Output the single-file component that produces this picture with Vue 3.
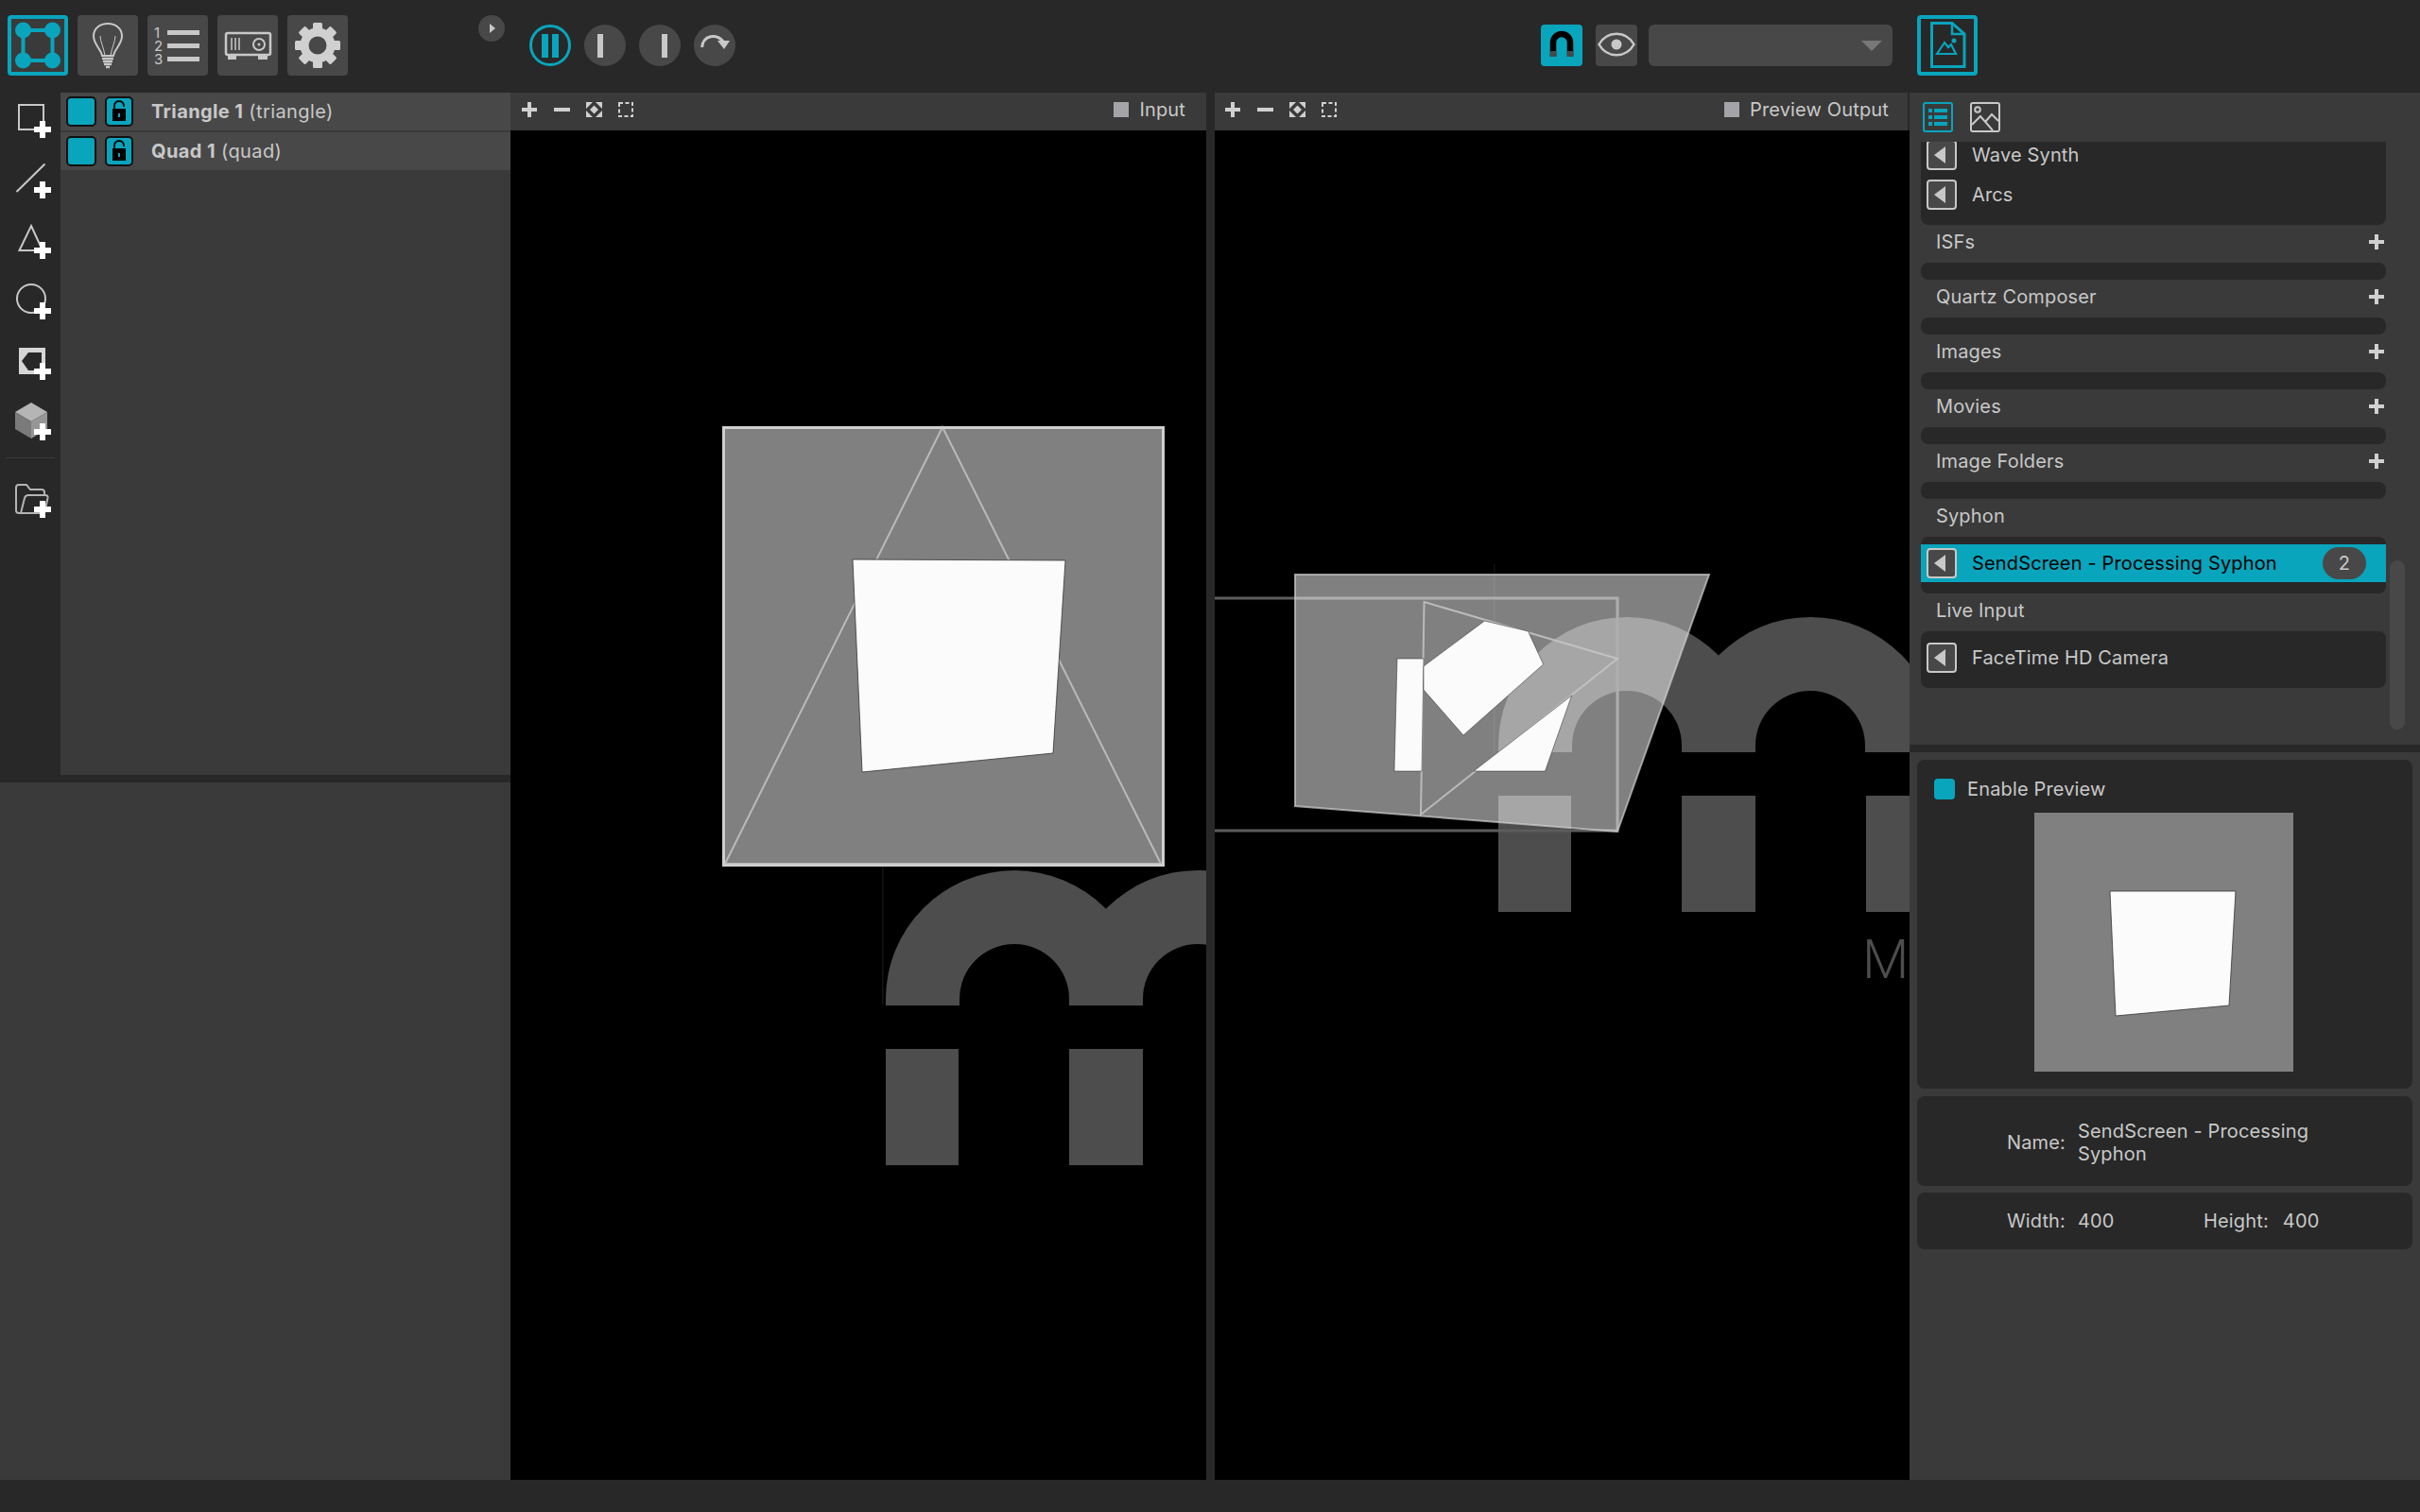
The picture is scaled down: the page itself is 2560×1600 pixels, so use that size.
<script setup>
const layers = [
  { name: 'Triangle 1', type: '(triangle)' },
  { name: 'Quad 1', type: '(quad)' },
]
const emptySections = ['ISFs', 'Quartz Composer', 'Images', 'Movies', 'Image Folders']
const generators = ['Wave Synth', 'Arcs']
const gearTeeth = [0, 45, 90, 135, 180, 225, 270, 315]
</script>

<template>
  <div class="app">
    <!-- top toolbar -->
    <header class="topbar">
      <div class="mode-btns">
        <button class="mode-btn mode-btn--active">
          <svg viewBox="0 0 56 56" width="56" height="56">
            <g transform="translate(-4 -4)" fill="#08a5bd" stroke="#08a5bd">
              <path d="M16.5 16H47.5V48H16.5Z" fill="none" stroke-width="4" />
              <circle cx="16.5" cy="16" r="8.500" stroke="none" />
              <circle cx="47.5" cy="16" r="8.500" stroke="none" />
              <circle cx="16.5" cy="48" r="8.500" stroke="none" />
              <circle cx="47.5" cy="48" r="8.500" stroke="none" />
            </g>
          </svg>
        </button>
        <button class="mode-btn">
          <svg viewBox="0 0 64 64" width="64" height="64" fill="none" stroke="#c8c8c8" stroke-width="2">
            <path d="M26 43C25 36 17 31 17 22C17 14 24 9 32 9C40 9 47 14 47 22C47 31 39 36 38 43Z" />
            <path d="M29 43C28 35 24 28 24 22M35 43C36 35 40 28 40 22" stroke-width="1" />
            <path d="M26 46H38M27 49H37M28 52H36" stroke-width="2.4" />
            <path d="M30 55H34" stroke-width="2.4" />
          </svg>
        </button>
        <button class="mode-btn">
          <svg viewBox="0 0 64 64" width="64" height="64">
            <g fill="#c8c8c8">
              <rect x="21" y="16" width="34" height="5" />
              <rect x="21" y="30" width="34" height="5" />
              <rect x="21" y="44" width="34" height="5" />
            </g>
            <g class="list-digits" fill="#c8c8c8">
              <text x="7" y="24">1</text>
              <text x="7" y="38">2</text>
              <text x="7" y="52">3</text>
            </g>
          </svg>
        </button>
        <button class="mode-btn">
          <svg viewBox="0 0 64 64" width="64" height="64" fill="none" stroke="#c8c8c8">
            <rect x="9" y="19" width="47" height="23" rx="2" stroke-width="2.5" />
            <path d="M15 24V37M19 24V37M23 24V37" stroke-width="1.5" />
            <circle cx="44" cy="31" r="6" stroke-width="2" />
            <circle cx="44" cy="31" r="1.5" fill="#c8c8c8" stroke="none" />
            <path d="M11 43H20V47H11ZM43 43H53V47H43Z" fill="#c8c8c8" stroke="none" />
          </svg>
        </button>
        <button class="mode-btn">
          <svg viewBox="0 0 64 64" width="64" height="64">
            <circle cx="32" cy="32" r="14" fill="none" stroke="#d0d0d0" stroke-width="9" />
            <rect
              v-for="a in gearTeeth"
              :key="a"
              x="27"
              y="8"
              width="10"
              height="10"
              rx="1.5"
              fill="#d0d0d0"
              :transform="`rotate(${a} 32 32)`"
            />
          </svg>
        </button>
      </div>

      <button class="collapse-btn">
        <svg viewBox="0 0 28 28" width="28" height="28"><path d="M12 9L18 14L12 19Z" fill="#c8c8c8" /></svg>
      </button>

      <div class="transport">
        <button class="round-btn round-btn--pause">
          <span class="pause-bar"></span><span class="pause-bar"></span>
        </button>
        <button class="round-btn"><span class="step-bar step-bar--left"></span></button>
        <button class="round-btn"><span class="step-bar step-bar--right"></span></button>
        <button class="round-btn">
          <svg viewBox="0 0 44 44" width="44" height="44">
            <path d="M8.500 24C10 11 24 9 31 18" fill="none" stroke="#c8c8c8" stroke-width="3" />
            <path d="M25 17H38L32 26Z" fill="#c8c8c8" />
          </svg>
        </button>
      </div>

      <div class="output-tools">
        <button class="square-btn square-btn--blue">
          <svg viewBox="0 0 44 44" width="44" height="44" fill="none">
            <path d="M13 34V19A9 9 0 0 1 31 19V34" stroke="#000" stroke-width="6.500" />
            <rect x="9.800" y="28" width="6.500" height="6" fill="#484848" />
            <rect x="27.800" y="28" width="6.500" height="6" fill="#484848" />
          </svg>
        </button>
        <button class="square-btn">
          <svg viewBox="0 0 44 44" width="44" height="44" fill="none">
            <path d="M3.500 21C12 6 32 6 40.500 21C32 36 12 36 3.500 21Z" stroke="#c8c8c8" stroke-width="2.500" />
            <circle cx="22" cy="21" r="5.500" fill="#c8c8c8" />
          </svg>
        </button>
        <div class="select"><span class="select__arrow"></span></div>
      </div>

      <button class="doc-btn">
        <svg viewBox="0 0 56 56" width="56" height="56" fill="none" stroke="#08a5bd" stroke-width="3">
          <path d="M11.500 4.500H33L46 16V50.500H11.500Z" />
          <path d="M33 4.500V16H46" stroke-width="2.500" />
          <path d="M17 37L25 25L29 30L32 27L37 37Z" stroke-width="2.200" />
          <circle cx="35" cy="23" r="2.500" fill="#08a5bd" stroke="none" />
        </svg>
      </button>
    </header>

    <main class="workspace">
      <!-- left column: tools and layer list -->
      <aside class="left-col">
        <div class="left-top">
          <nav class="tools">
            <svg class="tool" viewBox="0 0 64 64" fill="none" stroke="#c8c8c8" stroke-width="2">
              <rect x="20" y="6" width="26" height="26" />
              <path class="plus" d="M36 29H42V23H48V29H54V35H48V41H42V35H36Z" />
            </svg>
            <svg class="tool" viewBox="0 0 64 64" fill="none" stroke="#c8c8c8" stroke-width="2">
              <path d="M17.500 34L47.500 4.500" />
              <path class="plus" d="M36 29H42V23H48V29H54V35H48V41H42V35H36Z" />
            </svg>
            <svg class="tool" viewBox="0 0 64 64" fill="none" stroke="#c8c8c8" stroke-width="2">
              <path d="M33 6L45 32H20.500Z" />
              <path class="plus" d="M36 29H42V23H48V29H54V35H48V41H42V35H36Z" />
            </svg>
            <svg class="tool" viewBox="0 0 64 64" fill="none" stroke="#c8c8c8" stroke-width="2">
              <circle cx="33" cy="19" r="15" />
              <path class="plus" d="M36 29H42V23H48V29H54V35H48V41H42V35H36Z" />
            </svg>
            <svg class="tool" viewBox="0 0 64 64" fill="none">
              <path d="M20 7H48V35H20Z" fill="#d6d6d6" />
              <path d="M23 21L30 12H44V31H30Z" fill="#282828" />
              <path class="plus" d="M36 29H42V23H48V29H54V35H48V41H42V35H36Z" />
            </svg>
            <svg class="tool" viewBox="0 0 64 64" fill="none">
              <path d="M33 1L50 11L33 21L16 11Z" fill="#b5b5b5" />
              <path d="M16 11L33 21V39L16 29Z" fill="#7a7a7a" />
              <path d="M33 21L50 11V29L33 39Z" fill="#969696" />
              <path class="plus" d="M36 29H42V23H48V29H54V35H48V41H42V35H36Z" />
            </svg>
            <div class="tools__sep"></div>
            <svg class="tool tool--folder" viewBox="0 0 64 64" fill="none" stroke="#b4b4b4" stroke-width="2">
              <path d="M22 36H20Q17 36 17 33V9Q17 6 20 6H28L32 11H44Q47 11 47 14V17" />
              <path d="M22 36L26 20Q27 17 30 17H48Q51 17 50.500 20L47 36Z" />
              <path class="plus" d="M36 29H42V23H48V29H54V35H48V41H42V35H36Z" />
            </svg>
          </nav>
          <div class="layers">
            <div v-for="layer in layers" :key="layer.name" class="layer">
              <span class="layer__check"></span>
              <span class="layer__lock">
                <svg viewBox="0 0 30 32" width="30" height="32">
                  <path d="M10 13V10A5 5 0 0 1 20 10V11" fill="none" stroke="#000" stroke-width="2" />
                  <rect x="8" y="13" width="14" height="13" fill="#000" />
                  <rect x="14" y="18" width="2" height="4" fill="#08a5bd" />
                </svg>
              </span>
              <span class="layer__label"><b>{{ layer.name }}</b> {{ layer.type }}</span>
            </div>
          </div>
        </div>
        <div class="left-bottom"></div>
      </aside>

      <!-- input canvas -->
      <section class="stage stage--input">
        <div class="stage__bar">
          <svg class="stage__icons" viewBox="0 0 130 16" width="130" height="16">
            <path d="M6 0H10V6H16V10H10V16H6V10H0V6H6Z" fill="#d0d0d0" />
            <rect x="34" y="6" width="17" height="4" fill="#d0d0d0" />
            <path d="M68 0H75L68 7ZM85 0H78L85 7ZM68 16H75L68 9ZM85 16H78L85 9ZM76.500 3.500L81 8L76.500 12.500L72 8Z" fill="#d0d0d0" />
            <rect x="103" y="1" width="14" height="14" fill="none" stroke="#d0d0d0" stroke-width="2" stroke-dasharray="4 2.500" />
          </svg>
          <span class="stage__swatch"></span>
          <span class="stage__name">Input</span>
        </div>
        <svg class="stage__canvas" viewBox="540 138 736 1428">
          <rect x="933" y="917" width="1.500" height="146" fill="#141414" />
          <g fill="#4d4d4d">
            <path d="M937 1057A136 136 0 0 1 1209 1057L1209 1064H1131V1057A58 58 0 0 0 1015 1057V1064H937Z" />
            <path d="M1131 1057A136 136 0 0 1 1403 1057V1064H1325V1057A58 58 0 0 0 1209 1057V1064H1131Z" />
            <rect x="937" y="1110" width="77" height="123" />
            <rect x="1131" y="1110" width="78" height="123" />
          </g>
          <rect x="765.500" y="452.500" width="465" height="463" fill="#808080" stroke="#cfcfcf" stroke-width="3" />
          <path d="M997 452L1228 914H767Z" fill="none" stroke="#c8c8c8" stroke-width="2" opacity=".8" />
          <path d="M902 592L1127 593L1114 797L912 817Z" fill="#fbfbfb" stroke="#333" stroke-width=".8" />
        </svg>
      </section>

      <div class="stage-gap"></div>

      <!-- preview output canvas -->
      <section class="stage stage--output">
        <div class="stage__bar stage__bar--output">
          <svg class="stage__icons" viewBox="0 0 130 16" width="130" height="16">
            <path d="M6 0H10V6H16V10H10V16H6V10H0V6H6Z" fill="#d0d0d0" />
            <rect x="34" y="6" width="17" height="4" fill="#d0d0d0" />
            <path d="M68 0H75L68 7ZM85 0H78L85 7ZM68 16H75L68 9ZM85 16H78L85 9ZM76.500 3.500L81 8L76.500 12.500L72 8Z" fill="#d0d0d0" />
            <rect x="103" y="1" width="14" height="14" fill="none" stroke="#d0d0d0" stroke-width="2" stroke-dasharray="4 2.500" />
          </svg>
          <span class="stage__swatch"></span>
          <span class="stage__name">Preview Output</span>
        </div>
        <svg class="stage__canvas" viewBox="1285 138 735 1428">
          <rect x="1580" y="597" width="1.500" height="199" fill="#111" />
          <g fill="#4d4d4d">
            <path d="M1585 789A136 136 0 0 1 1857 789V796H1779V789A58 58 0 0 0 1663 789V796H1585Z" />
            <path d="M1779 789A136 136 0 0 1 2051 789V796H1973V789A58 58 0 0 0 1857 789V796H1779Z" />
            <rect x="1585" y="842" width="77" height="123" />
            <rect x="1779" y="842" width="78" height="123" />
            <rect x="1974" y="842" width="78" height="123" />
          </g>
          <text class="logo-word" x="1970" y="1035">M</text>
          <path d="M1285 633H1711V879H1285" fill="none" stroke="#5c5c5c" stroke-width="3" />
          <path d="M1370 608H1808L1711 880L1370 853Z" fill="#fff" fill-opacity=".5" stroke="#cfcfcf" stroke-width="2" stroke-opacity=".7" />
          <path d="M1506.500 637L1711 697L1503 862Z" fill="none" stroke="#c8c8c8" stroke-width="2" stroke-opacity=".8" />
          <g fill="#fbfbfb" stroke="#222" stroke-width=".5">
            <path d="M1478 697H1506L1504 816H1475Z" />
            <path d="M1570.500 657L1616.500 668L1632.600 703L1548 778L1506 730V705Z" />
            <path d="M1662.600 736L1634.500 816H1559Z" />
          </g>
        </svg>
      </section>

      <!-- right column -->
      <aside class="right-col">
        <div class="browser">
          <div class="browser__tabs">
            <span class="tab tab--active">
              <svg viewBox="0 0 28 28" width="28" height="28" fill="#08a5bd">
                <rect x="4" y="5" width="4" height="4" /><rect x="10" y="5" width="14" height="4" />
                <rect x="4" y="12" width="4" height="4" /><rect x="10" y="12" width="14" height="4" />
                <rect x="4" y="19" width="4" height="4" /><rect x="10" y="19" width="14" height="4" />
              </svg>
            </span>
            <span class="tab">
              <svg viewBox="0 0 28 28" width="28" height="28" fill="none" stroke="#c8c8c8" stroke-width="2">
                <circle cx="6" cy="6" r="2.800" />
                <path d="M0 22L9 13L22 28M14 19L21 11L28 18" />
              </svg>
            </span>
          </div>

          <div class="group group--clipped">
            <div v-for="item in generators" :key="item" class="row">
              <span class="row__btn"></span>
              <span class="row__label">{{ item }}</span>
            </div>
          </div>

          <div v-for="section in emptySections" :key="section">
            <div class="section-title">
              {{ section }}
              <svg viewBox="0 0 16 16" width="16" height="16"><path d="M6 0H10V6H16V10H10V16H6V10H0V6H6Z" fill="#d0d0d0" /></svg>
            </div>
            <div class="empty-bar"></div>
          </div>

          <div class="section-title">Syphon</div>
          <div class="group">
            <div class="row row--selected">
              <span class="row__btn"></span>
              <span class="row__label">SendScreen - Processing Syphon</span>
              <span class="row__badge">2</span>
            </div>
          </div>

          <div class="section-title">Live Input</div>
          <div class="group">
            <div class="row">
              <span class="row__btn"></span>
              <span class="row__label">FaceTime HD Camera</span>
            </div>
          </div>

          <div class="browser__scroll"></div>
        </div>

        <div class="inspector">
          <div class="card card--preview">
            <label class="enable">
              <span class="enable__box"></span>
              Enable Preview
            </label>
            <svg class="preview-img" viewBox="0 0 274 274" width="274" height="274">
              <rect width="274" height="274" fill="#808080" />
              <path d="M80 83H213L206 204L86 215Z" fill="#fbfbfb" stroke="#333" stroke-width=".8" />
            </svg>
          </div>
          <div class="card card--name">
            <span class="card__label">Name:</span>
            <span class="card__value">SendScreen - Processing Syphon</span>
          </div>
          <div class="card card--size">
            <span class="card__label">Width:</span>
            <span class="card__num">400</span>
            <span>Height:</span>
            <span class="card__num2">400</span>
          </div>
        </div>
      </aside>
    </main>

    <footer class="statusbar"></footer>
  </div>
</template>

<style>
html, body {
  margin: 0;
  background: #282828;
}
</style>

<style scoped>
.app {
  width: 2560px;
  height: 1600px;
  display: flex;
  flex-direction: column;
  background: #282828;
  color: #c8c8c8;
  font-family: Inter, "Liberation Sans", sans-serif;
  font-size: 20px;
  letter-spacing: 0.15px;
  overflow: hidden;
}
button {
  padding: 0;
  border: 0;
  background: none;
  display: block;
}
svg {
  display: block;
}

/* top bar */
.topbar {
  height: 98px;
  flex: none;
  display: flex;
  align-items: flex-start;
  box-sizing: border-box;
  padding: 16px 0 0 8px;
}
.mode-btns {
  display: flex;
  gap: 10px;
}
.mode-btn {
  width: 64px;
  height: 64px;
  border-radius: 4px;
  background: #484848;
  box-sizing: border-box;
}
.mode-btn--active {
  border: 4px solid #08a5bd;
  background: #3a3a3a;
}
.collapse-btn {
  width: 28px;
  height: 28px;
  margin-left: 138px;
  border-radius: 50%;
  background: #484848;
}
.transport {
  display: flex;
  gap: 14px;
  margin: 10px 0 0 26px;
}
.round-btn {
  width: 44px;
  height: 44px;
  border-radius: 50%;
  background: #484848;
  display: flex;
  align-items: center;
  justify-content: center;
  box-sizing: border-box;
}
.round-btn--pause {
  background: none;
  border: 3px solid #08a5bd;
  gap: 4px;
}
.pause-bar {
  width: 7px;
  height: 25px;
  background: #08a5bd;
}
.step-bar {
  width: 6px;
  height: 25px;
  background: #c8c8c8;
}
.step-bar--left { margin-right: 10px; }
.step-bar--right { margin-left: 10px; }
.output-tools {
  display: flex;
  gap: 14px;
  margin: 10px 0 0 852px;
}
.square-btn {
  width: 44px;
  height: 44px;
  border-radius: 4px;
  background: #484848;
}
.square-btn--blue {
  background: #08a5bd;
}
.select {
  width: 258px;
  height: 44px;
  margin-left: -2px;
  border-radius: 6px;
  background: #484848;
  display: flex;
  align-items: center;
  justify-content: flex-end;
  padding-right: 11px;
  box-sizing: border-box;
}
.select__arrow {
  width: 0;
  height: 0;
  border-left: 11px solid transparent;
  border-right: 11px solid transparent;
  border-top: 11px solid #777;
}
.doc-btn {
  width: 64px;
  height: 64px;
  margin-left: 26px;
  border: 4px solid #08a5bd;
  border-radius: 4px;
  box-sizing: border-box;
}

/* main area */
.workspace {
  flex: 1;
  display: flex;
  min-height: 0;
}
.left-col {
  width: 540px;
  flex: none;
  display: flex;
  flex-direction: column;
}
.left-top {
  height: 722px;
  flex: none;
  display: flex;
}
.left-bottom {
  margin-top: 8px;
  flex: 1;
  background: #3a3a3a;
}
.tools {
  width: 64px;
  flex: none;
  padding-top: 7px;
  box-sizing: border-box;
}
.tool {
  width: 64px;
  height: 64px;
  overflow: visible;
}
.tool .plus {
  fill: #fff;
  stroke: none;
}
.tools__sep {
  height: 1px;
  margin: -5px 6px 0;
  background: #3a3a3a;
}
.tool--folder {
  margin-top: 22px;
}
.layers {
  flex: 1;
  background: #3a3a3a;
}
.layer {
  height: 40px;
  margin-bottom: 2px;
  background: #484848;
  display: flex;
  align-items: center;
  padding-left: 6px;
}
.layer__check,
.layer__lock {
  width: 30px;
  height: 32px;
  box-sizing: border-box;
  border: 2px solid #111;
  border-radius: 5px;
  background: #08a5bd;
}
.layer__check {
  width: 32px;
}
.layer__lock {
  margin-left: 9px;
  position: relative;
}
.layer__lock svg {
  position: absolute;
  left: -2px;
  top: -2px;
}
.layer__label {
  margin-left: 19px;
  white-space: nowrap;
  letter-spacing: 0.4px;
}
.layer__label b {
  font-weight: 700;
}

/* canvases */
.stage {
  display: flex;
  flex-direction: column;
  flex: none;
}
.stage--input {
  width: 736px;
}
.stage--output {
  width: 735px;
}
.stage-gap {
  width: 9px;
  flex: none;
}
.stage__bar {
  height: 40px;
  flex: none;
  background: #3a3a3a;
  display: flex;
  align-items: center;
  padding: 0 22px 4px 12px;
  box-sizing: border-box;
}
.stage__bar--output {
  margin-right: 2px;
  padding-left: 11px;
  padding-right: 20px;
}
.stage__icons {
  margin-right: auto;
}
.stage__swatch {
  width: 16px;
  height: 16px;
  background: #a3a3a8;
  margin-right: 11px;
}
.stage__name {
  line-height: 1;
}
.stage__canvas {
  flex: 1;
  width: 100%;
  min-height: 0;
  background: #000;
}
.logo-word {
  font-family: Roboto, Inter, sans-serif;
  font-weight: 300;
  font-size: 57px;
  letter-spacing: 0;
  fill: #4d4d4d;
}
.list-digits {
  font-size: 15px;
  font-family: Inter, sans-serif;
}

/* right column */
.right-col {
  flex: 1;
  min-width: 0;
  display: flex;
  flex-direction: column;
  background: #3a3a3a;
}
.browser {
  height: 690px;
  flex: none;
  position: relative;
  padding: 0 36px 0 12px;
  box-sizing: border-box;
  overflow: hidden;
}
.browser__tabs {
  height: 52px;
  display: flex;
  gap: 18px;
  padding: 10px 0 0 2px;
  box-sizing: border-box;
}
.tab {
  width: 32px;
  height: 32px;
  box-sizing: border-box;
  border: 2px solid #c8c8c8;
  border-radius: 3px;
  overflow: hidden;
}
.tab--active {
  border-color: #08a5bd;
}
.group {
  background: #282828;
  border-radius: 8px;
  padding: 8px 0 12px;
}
.group--clipped {
  border-radius: 0 0 8px 8px;
  padding: 0 0 16px;
  overflow: hidden;
}
.group--clipped .row {
  height: 32px;
}
.group--clipped .row:first-child {
  margin-top: -2px;
  margin-bottom: 10px;
}
.row {
  height: 40px;
  display: flex;
  align-items: center;
  padding-left: 6px;
}
.row--selected {
  background: #08a5bd;
  color: #000;
}
.row__btn {
  width: 32px;
  height: 32px;
  flex: none;
  box-sizing: border-box;
  border: 2px solid #c8c8c8;
  border-radius: 4px;
  background: #484848;
  display: flex;
  align-items: center;
  justify-content: center;
}
.row__btn::before {
  content: "";
  width: 0;
  height: 0;
  margin-right: 4px;
  border-top: 9px solid transparent;
  border-bottom: 9px solid transparent;
  border-right: 12px solid #c8c8c8;
}
.row__label {
  margin-left: 16px;
  white-space: nowrap;
}
.row__badge {
  margin-left: auto;
  margin-right: 21px;
  width: 46px;
  height: 34px;
  border-radius: 17px;
  background: #484848;
  color: #c8c8c8;
  display: flex;
  align-items: center;
  justify-content: center;
}
.section-title {
  height: 40px;
  display: flex;
  align-items: center;
  justify-content: space-between;
  box-sizing: border-box;
  padding: 0 2px 4px 16px;
}
.empty-bar {
  height: 18px;
  background: #282828;
  border-radius: 8px;
}
.browser__scroll {
  position: absolute;
  left: 508px;
  top: 495px;
  width: 16px;
  height: 179px;
  border-radius: 8px;
  background: #484848;
}
.inspector {
  flex: 1;
  border-top: 8px solid #282828;
  padding: 8px 8px 0;
  display: flex;
  flex-direction: column;
}
.card {
  background: #282828;
  border-radius: 8px;
  box-sizing: border-box;
}
.card--preview {
  height: 348px;
  padding: 20px 18px 0;
}
.enable {
  display: flex;
  align-items: center;
  gap: 13px;
  height: 22px;
}
.enable__box {
  width: 22px;
  height: 22px;
  border-radius: 4px;
  background: #08a5bd;
}
.preview-img {
  margin: 14px 0 0 106px;
}
.card--name {
  height: 95px;
  margin-top: 8px;
  padding-top: 2px;
  display: flex;
  align-items: center;
}
.card__label {
  width: 157px;
  text-align: right;
  flex: none;
}
.card__value {
  margin-left: 13px;
  width: 300px;
  line-height: 24px;
}
.card--size {
  height: 60px;
  margin-top: 7px;
  display: flex;
  align-items: center;
}
.card__num {
  margin-left: 13px;
  width: 133px;
}
.card__num2 {
  margin-left: 15px;
}
.statusbar {
  height: 34px;
  flex: none;
  background: #282828;
}
</style>
